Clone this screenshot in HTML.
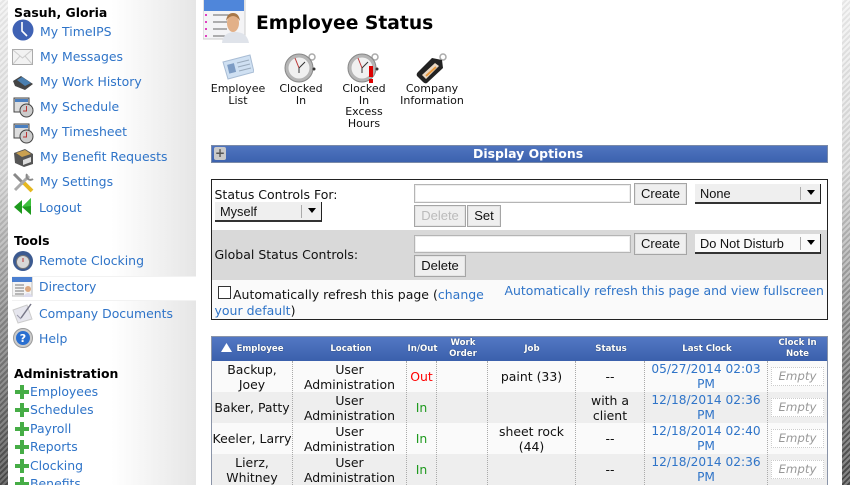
<!DOCTYPE html>
<html><head><meta charset="utf-8"><title>Employee Status</title>
<style>
html,body{margin:0;padding:0;background:#fff}
#p{position:relative;width:850px;height:485px;overflow:hidden;background:#fff;font-family:"DejaVu Sans",sans-serif;font-size:12.45px;color:#111}
#p div,#p svg,#p span.a{position:absolute}
.t{white-space:nowrap;line-height:16px}
.l{color:#2f74c8}
.b{font-weight:bold;color:#000}
.ic{font-size:11px;line-height:11.7px;text-align:center;color:#111}
.btn{box-sizing:border-box;border:1px solid #a5a5a5;background:#efefef;font-family:"Liberation Sans",sans-serif;font-size:13px;line-height:20px;text-align:center;color:#111;box-shadow:inset 0 0 0 1px #e4e4e4}
.inp{box-sizing:border-box;border:1px solid #b5b5b5;background:#fff;box-shadow:inset 0 0 0 1px #eee}
.sel{box-sizing:border-box;background:#efefef;border-right:1px solid #222;border-bottom:2px solid #333;font-family:"Liberation Sans",sans-serif;font-size:12.8px;line-height:20px;color:#111;padding-left:5px}
.sel i{position:absolute;right:19px;top:3px;width:1px;height:13px;background:#aaa}
.sel b{position:absolute;right:5px;top:6px;border:4.5px solid transparent;border-top:5px solid #000;border-bottom:0}
.th{color:#fff;font-weight:bold;font-size:8.6px;line-height:11px;text-align:center;text-shadow:0 0 1px #234}
.td{font-size:12.45px;line-height:15.5px;text-align:center;color:#111;display:flex;align-items:center;justify-content:center;padding-top:1px;box-sizing:border-box}
.d{font-size:12.2px;color:#2f74c8}
.em{box-sizing:border-box;border:1px dotted #ccc;background:#fff;color:#999;font-style:italic;font-size:11.8px;line-height:17px;text-align:center}
</style></head><body><div id="p">
<!-- side stripes -->
<div style="left:0;top:0;width:8px;height:485px;background:repeating-linear-gradient(135deg,rgba(255,255,255,.22) 0 2px,rgba(0,0,0,.05) 2px 4px),linear-gradient(#f2f2f2,#d8d8d8 35%,#8a8a8a 65%,#4a4a4a)"></div>
<div style="left:842px;top:0;width:8px;height:485px;background:repeating-linear-gradient(135deg,rgba(255,255,255,.3) 0 2px,rgba(0,0,0,.05) 2px 4px),linear-gradient(#f2f2f2,#d8d8d8 35%,#8a8a8a 65%,#4a4a4a)"></div>
<!-- sidebar -->
<div style="left:8px;top:0;width:188px;height:485px;background:linear-gradient(90deg,#fff 55%,#e6e6e6)"></div>
<div style="left:12px;top:276px;width:184px;height:25px;background:#fff;border-top:1px solid #f2f2f2;border-bottom:1px solid #f2f2f2;box-sizing:border-box"></div>

<div class="t b" style="left:14px;top:5px">Sasuh, Gloria</div>
<svg style="left:12px;top:19px" width="22" height="22" viewBox="0 0 22 22"><circle cx="11" cy="11" r="10.500" fill="#3f62b4"/><path d="M10 3V12L15 17" fill="none" stroke="#fff" stroke-width="1.600"/></svg>
<div class="t l" style="left:40px;top:24px">My TimeIPS</div>
<svg style="left:12px;top:49px" width="21" height="16" viewBox="0 0 21 16"><rect x=".5" y=".5" width="20" height="15" fill="#f2f2f2" stroke="#aaa"/><path d="M1 1L10.500 9L20 1M1 15L8 7M20 15L13 7" fill="none" stroke="#ccc"/></svg>
<div class="t l" style="left:40px;top:49px">My Messages</div>
<svg style="left:12px;top:75px" width="22" height="16" viewBox="0 0 22 16"><path d="M1 6L9 1L21 9L13 15L3 11Z" fill="#444"/><path d="M5 5L10 2L19 8L13 11Z" fill="#4a7fb0"/></svg>
<div class="t l" style="left:40px;top:74px">My Work History</div>
<svg style="left:13px;top:97px" width="21" height="21" viewBox="0 0 21 21"><rect x="1" y="1" width="15" height="14" fill="#ddd" stroke="#444"/><rect x="2" y="2" width="13" height="3" fill="#4a7fc0"/><circle cx="13.500" cy="13.500" r="6.500" fill="#ccc" stroke="#444"/><path d="M13.500 9V14H10" stroke="#b33" fill="none"/></svg>
<div class="t l" style="left:40px;top:99px">My Schedule</div>
<svg style="left:13px;top:123px" width="21" height="21" viewBox="0 0 21 21"><rect x="1" y="1" width="15" height="14" fill="#ddd" stroke="#444"/><rect x="2" y="2" width="13" height="3" fill="#4a7fc0"/><circle cx="13.500" cy="13.500" r="6.500" fill="#ccc" stroke="#444"/><path d="M13.500 9V14H10" stroke="#b33" fill="none"/></svg>
<div class="t l" style="left:40px;top:124px">My Timesheet</div>
<svg style="left:13px;top:148px" width="21" height="20" viewBox="0 0 21 20"><path d="M1 5L12 1L20 6V16L11 19L2 15Z" fill="#555"/><path d="M3 5L12 2L18 6L9 9Z" fill="#c9a050"/><path d="M10 12L18 9V14L10 17Z" fill="#ddd"/></svg>
<div class="t l" style="left:40px;top:149px">My Benefit Requests</div>
<svg style="left:12px;top:172px" width="22" height="21" viewBox="0 0 22 21"><path d="M2 2L12 12" stroke="#888" stroke-width="3"/><path d="M12 11L20 19" stroke="#e6b820" stroke-width="4"/><path d="M17 4L3 18" stroke="#aaa" stroke-width="3"/><path d="M15 2A4 4 0 0 0 21 7" fill="none" stroke="#888" stroke-width="2"/></svg>
<div class="t l" style="left:40px;top:174px">My Settings</div>
<svg style="left:13px;top:197px" width="19" height="19" viewBox="0 0 19 19"><path d="M1 10L9 3V17ZM9 10L18 1V18Z" fill="#1d9a1d"/><path d="M9 10L18 1V9Z" fill="#3cc03c"/></svg>
<div class="t l" style="left:39px;top:200px">Logout</div>

<div class="t b" style="left:14px;top:233px">Tools</div>
<svg style="left:12px;top:250px" width="22" height="22" viewBox="0 0 22 22"><circle cx="11" cy="11" r="10" fill="#3c5a90"/><circle cx="11" cy="12" r="6.500" fill="#d8d8d8" stroke="#777"/><path d="M11 8V12" stroke="#b33"/></svg>
<div class="t l" style="left:39px;top:253px">Remote Clocking</div>
<svg style="left:12px;top:277px" width="22" height="21" viewBox="0 0 22 21"><rect x="0" y="0" width="20" height="19" fill="#f4f4f4" stroke="#bbb"/><rect x="0" y="0" width="20" height="5" fill="#4a7fd0"/><path d="M3 8H12M3 11H12M3 14H12M3 17H12" stroke="#777"/><circle cx="16" cy="12" r="3" fill="#dca880"/><path d="M11 20Q16 12 21 20Z" fill="#dde"/></svg>
<div class="t l" style="left:39px;top:279px">Directory</div>
<svg style="left:12px;top:303px" width="22" height="21" viewBox="0 0 22 21"><path d="M1 7L15 2L20 16L6 20Z" fill="#e6e6ee" stroke="#ccc"/><path d="M9 15L19 1" stroke="#778" stroke-width="1.500"/><path d="M5 12L9 16" stroke="#99a"/></svg>
<div class="t l" style="left:39px;top:306px">Company Documents</div>
<svg style="left:13px;top:328px" width="20" height="20" viewBox="0 0 20 20"><circle cx="10" cy="10" r="9.500" fill="#ccc" stroke="#999"/><circle cx="10" cy="10" r="7" fill="#2a6fd0"/><text x="10" y="14" font-family="DejaVu Sans" font-size="11" font-weight="bold" fill="#fff" text-anchor="middle">?</text></svg>
<div class="t l" style="left:39px;top:331px">Help</div>

<div class="t b" style="left:14px;top:366px">Administration</div>
<svg style="left:15px;top:385px" width="14" height="14" viewBox="0 0 14 14"><path d="M5 0H9V5H14V9H9V14H5V9H0V5H5Z" fill="#46ad46"/></svg>
<div class="t l" style="left:30px;top:384px">Employees</div>
<svg style="left:15px;top:403px" width="14" height="14" viewBox="0 0 14 14"><path d="M5 0H9V5H14V9H9V14H5V9H0V5H5Z" fill="#46ad46"/></svg>
<div class="t l" style="left:30px;top:402px">Schedules</div>
<svg style="left:15px;top:422px" width="14" height="14" viewBox="0 0 14 14"><path d="M5 0H9V5H14V9H9V14H5V9H0V5H5Z" fill="#46ad46"/></svg>
<div class="t l" style="left:30px;top:421px">Payroll</div>
<svg style="left:15px;top:440px" width="14" height="14" viewBox="0 0 14 14"><path d="M5 0H9V5H14V9H9V14H5V9H0V5H5Z" fill="#46ad46"/></svg>
<div class="t l" style="left:30px;top:439px">Reports</div>
<svg style="left:15px;top:459px" width="14" height="14" viewBox="0 0 14 14"><path d="M5 0H9V5H14V9H9V14H5V9H0V5H5Z" fill="#46ad46"/></svg>
<div class="t l" style="left:30px;top:458px">Clocking</div>
<svg style="left:15px;top:477px" width="14" height="14" viewBox="0 0 14 14"><path d="M5 0H9V5H14V9H9V14H5V9H0V5H5Z" fill="#46ad46"/></svg>
<div class="t l" style="left:30px;top:476px">Benefits</div>

<!-- header -->
<svg style="left:203px;top:0" width="48" height="44" viewBox="0 0 48 44"><rect x="0" y="-2" width="42" height="41" fill="#f4f4f6" stroke="#ccc"/><rect x="1" y="0" width="40" height="11" fill="#4f86da"/><path d="M10 15H26M10 22H24M10 29H24M10 36H22" stroke="#666"/><path d="M2 15H4M2 22H4M2 29H4M2 36H4" stroke="#e040c0" stroke-width="2"/><path d="M19 43Q20 32 32 32Q44 32 46 43Z" fill="#dfe3ea"/><ellipse cx="30" cy="23" rx="6" ry="9" fill="#e2b088"/><path d="M23 21Q24 13 30 13Q36 13 37 21Q34 16 30 16Q26 16 23 21Z" fill="#a87848"/></svg>
<div class="t" style="left:256px;top:12px;font-size:18.700px;font-weight:bold;color:#000;line-height:24px">Employee Status</div>

<svg style="left:222px;top:53px" width="32" height="27" viewBox="0 0 32 27"><path d="M1 9L28 2L32 19L6 26Z" fill="#cfe0f2" stroke="#a8bcd4"/><rect x="6" y="11" width="7" height="9" fill="#7d9cc4" transform="rotate(-14 9 15)"/><path d="M15 10L27 7M16 14L28 11M17 18L29 15" stroke="#9ab"/></svg>
<div class="ic" style="left:206px;top:83px;width:64px">Employee<br>List</div>

<svg style="left:284px;top:52px" width="34" height="32" viewBox="0 0 34 32"><circle cx="28" cy="5" r="3" fill="none" stroke="#aaa" stroke-width="1.500"/><circle cx="15" cy="16" r="14" fill="#b5b5b5" stroke="#888"/><circle cx="15" cy="16" r="10.500" fill="#f0f0f0"/><path d="M15 16L11 6" stroke="#b33"/><path d="M15 16L21 10M15 16L15 21" stroke="#333"/><circle cx="30" cy="17" r="1.500" fill="#333"/></svg>
<div class="ic" style="left:270px;top:83px;width:62px">Clocked<br>In</div>

<svg style="left:347px;top:52px" width="34" height="32" viewBox="0 0 34 32"><circle cx="28" cy="5" r="3" fill="none" stroke="#aaa" stroke-width="1.500"/><circle cx="15" cy="16" r="14" fill="#b5b5b5" stroke="#888"/><circle cx="15" cy="16" r="10.500" fill="#f0f0f0"/><path d="M15 16L11 6" stroke="#b33"/><path d="M15 16L21 10M15 16L15 21" stroke="#333"/><circle cx="30" cy="17" r="1.500" fill="#333"/><rect x="22" y="14" width="4" height="11" fill="#d00"/><rect x="22" y="27" width="4" height="4" fill="#d00"/></svg>
<div class="ic" style="left:333px;top:83px;width:62px">Clocked<br>In<br>Excess<br>Hours</div>

<svg style="left:415px;top:52px" width="34" height="32" viewBox="0 0 34 32"><circle cx="28" cy="5" r="3" fill="none" stroke="#aaa" stroke-width="1.500"/><path d="M17 6L27 8L28 16L12 31Q10 32 8 30L2 24Q1 22 3 20Z" fill="#222"/><path d="M7 23L20 11L24 14L11 27Z" fill="#e9d8c4"/><path d="M11 24L21 15" stroke="#e89a40" stroke-width="2"/></svg>
<div class="ic" style="left:398px;top:83px;width:68px">Company<br>Information</div>

<!-- Display options bar -->
<div style="left:211px;top:145px;width:617px;height:18px;box-sizing:border-box;border:1px solid #7a8aa8;background:linear-gradient(#4f74bf,#3c62ae)"></div>
<div style="left:214px;top:147px;width:12px;height:13px;background:#c9c9c9;border-radius:2px;color:#555;font-size:12px;line-height:12px;text-align:center;font-weight:bold">+</div>
<div class="t" style="left:473px;top:146px;color:#fff;font-weight:bold;font-size:12.45px">Display Options</div>

<!-- Options box -->
<div style="left:211px;top:179px;width:617px;height:141px;box-sizing:border-box;border:1px solid #222;background:#fff"></div>
<div style="left:212px;top:230px;width:615px;height:50px;background:#d9d9d9"></div>
<div style="left:212px;top:280px;width:615px;height:39px;background:#fafafa"></div>

<div class="t" style="left:214.500px;top:186.500px;font-size:12.500px">Status Controls For:</div>
<div class="sel" style="left:215px;top:202px;width:107px;height:20px">Myself<i></i><b></b></div>
<div class="inp" style="left:414px;top:184px;width:217px;height:19px"></div>
<div class="btn" style="left:634px;top:183px;width:53px;height:22px">Create</div>
<div class="sel" style="left:695px;top:184px;width:126px;height:20px">None<i></i><b></b></div>
<div class="btn" style="left:414px;top:205px;width:52px;height:22px;color:#bbb">Delete</div>
<div class="btn" style="left:467px;top:205px;width:34px;height:22px">Set</div>

<div class="t" style="left:214.500px;top:247px;font-size:12.500px">Global Status Controls:</div>
<div class="inp" style="left:414px;top:235px;width:217px;height:18px"></div>
<div class="btn" style="left:634px;top:233px;width:53px;height:22px">Create</div>
<div class="sel" style="left:695px;top:234px;width:126px;height:20px;background:#fafafa">Do Not Disturb<i></i><b></b></div>
<div class="btn" style="left:414px;top:255px;width:52px;height:22px">Delete</div>

<div style="left:218px;top:286px;width:13px;height:13px;box-sizing:border-box;border:1px solid #333;background:#fff"></div>
<div class="t" style="left:233px;top:287px;font-size:12.500px">Automatically refresh this page (<span class="l">change</span></div>
<div class="t" style="left:214.500px;top:303px;font-size:12.500px"><span class="l">your default</span>)</div>
<div class="t l" style="left:504.500px;top:283px;font-size:12.450px">Automatically refresh this page and view fullscreen</div>

<!-- Table -->
<div style="left:211px;top:336px;width:617px;height:149px;box-sizing:border-box;border:1px solid #8a94a8;border-bottom:0;background:#fafafa"></div>
<div style="left:212px;top:337px;width:615px;height:24px;background:linear-gradient(#5378c4,#3b60ac)"></div>
<div style="left:212px;top:392px;width:615px;height:31px;background:#eee"></div>
<div style="left:212px;top:454px;width:615px;height:31px;background:#eee"></div>
<svg style="left:221px;top:343px" width="11" height="9" viewBox="0 0 11 9"><path d="M5.500 0L11 9H0Z" fill="#fff"/></svg>
<div class="th" style="left:228px;top:344px;width:64px">Employee</div>
<div class="th" style="left:293px;top:343px;width:116px;padding-top:1px">Location</div>
<div class="th" style="left:406px;top:343px;width:33px;padding-top:1px">In/Out</div>
<div class="th" style="left:437px;top:338px;width:52px">Work<br>Order</div>
<div class="th" style="left:488px;top:343px;width:88px;padding-top:1px">Job</div>
<div class="th" style="left:576px;top:343px;width:70px;padding-top:1px">Status</div>
<div class="th" style="left:645px;top:343px;width:124px;padding-top:1px">Last Clock</div>
<div class="th" style="left:768px;top:338px;width:59px">Clock In<br>Note</div>

<!-- dotted column lines -->
<div style="left:292px;top:361px;height:124px;border-left:1px dotted #aaa"></div>
<div style="left:406px;top:361px;height:124px;border-left:1px dotted #aaa"></div>
<div style="left:436px;top:361px;height:124px;border-left:1px dotted #aaa"></div>
<div style="left:487px;top:361px;height:124px;border-left:1px dotted #aaa"></div>
<div style="left:575px;top:361px;height:124px;border-left:1px dotted #aaa"></div>
<div style="left:644px;top:361px;height:124px;border-left:1px dotted #aaa"></div>
<div style="left:767px;top:361px;height:124px;border-left:1px dotted #aaa"></div>

<!-- row 1 -->
<div class="td" style="left:212px;top:361px;width:80px;height:31px">Backup,<br>Joey</div>
<div class="td" style="left:293px;top:361px;width:113px;height:31px">User<br>Administration</div>
<div class="td" style="left:407px;top:361px;width:29px;height:31px;color:#f00">Out</div>
<div class="td" style="left:488px;top:361px;width:87px;height:31px">paint (33)</div>
<div class="td" style="left:576px;top:361px;width:68px;height:31px">--</div>
<div class="td d" style="left:645px;top:361px;width:122px;height:31px">05/27/2014 02:03<br>PM</div>
<div class="em" style="left:771px;top:367px;width:53px;height:19px">Empty</div>
<!-- row 2 -->
<div class="td" style="left:212px;top:392px;width:80px;height:31px;white-space:nowrap">Baker, Patty</div>
<div class="td" style="left:293px;top:392px;width:113px;height:31px">User<br>Administration</div>
<div class="td" style="left:407px;top:392px;width:29px;height:31px;color:#1f9a1f">In</div>
<div class="td" style="left:576px;top:392px;width:68px;height:31px">with a<br>client</div>
<div class="td d" style="left:645px;top:392px;width:122px;height:31px">12/18/2014 02:36<br>PM</div>
<div class="em" style="left:771px;top:398px;width:53px;height:19px">Empty</div>
<!-- row 3 -->
<div class="td" style="left:212px;top:423px;width:80px;height:31px;white-space:nowrap">Keeler, Larry</div>
<div class="td" style="left:293px;top:423px;width:113px;height:31px">User<br>Administration</div>
<div class="td" style="left:407px;top:423px;width:29px;height:31px;color:#1f9a1f">In</div>
<div class="td" style="left:488px;top:423px;width:87px;height:31px">sheet rock<br>(44)</div>
<div class="td" style="left:576px;top:423px;width:68px;height:31px">--</div>
<div class="td d" style="left:645px;top:423px;width:122px;height:31px">12/18/2014 02:40<br>PM</div>
<div class="em" style="left:771px;top:429px;width:53px;height:19px">Empty</div>
<!-- row 4 -->
<div class="td" style="left:212px;top:454px;width:80px;height:31px">Lierz,<br>Whitney</div>
<div class="td" style="left:293px;top:454px;width:113px;height:31px">User<br>Administration</div>
<div class="td" style="left:407px;top:454px;width:29px;height:31px;color:#1f9a1f">In</div>
<div class="td" style="left:576px;top:454px;width:68px;height:31px">--</div>
<div class="td d" style="left:645px;top:454px;width:122px;height:31px">12/18/2014 02:36<br>PM</div>
<div class="em" style="left:771px;top:460px;width:53px;height:19px">Empty</div>
</div></body></html>
